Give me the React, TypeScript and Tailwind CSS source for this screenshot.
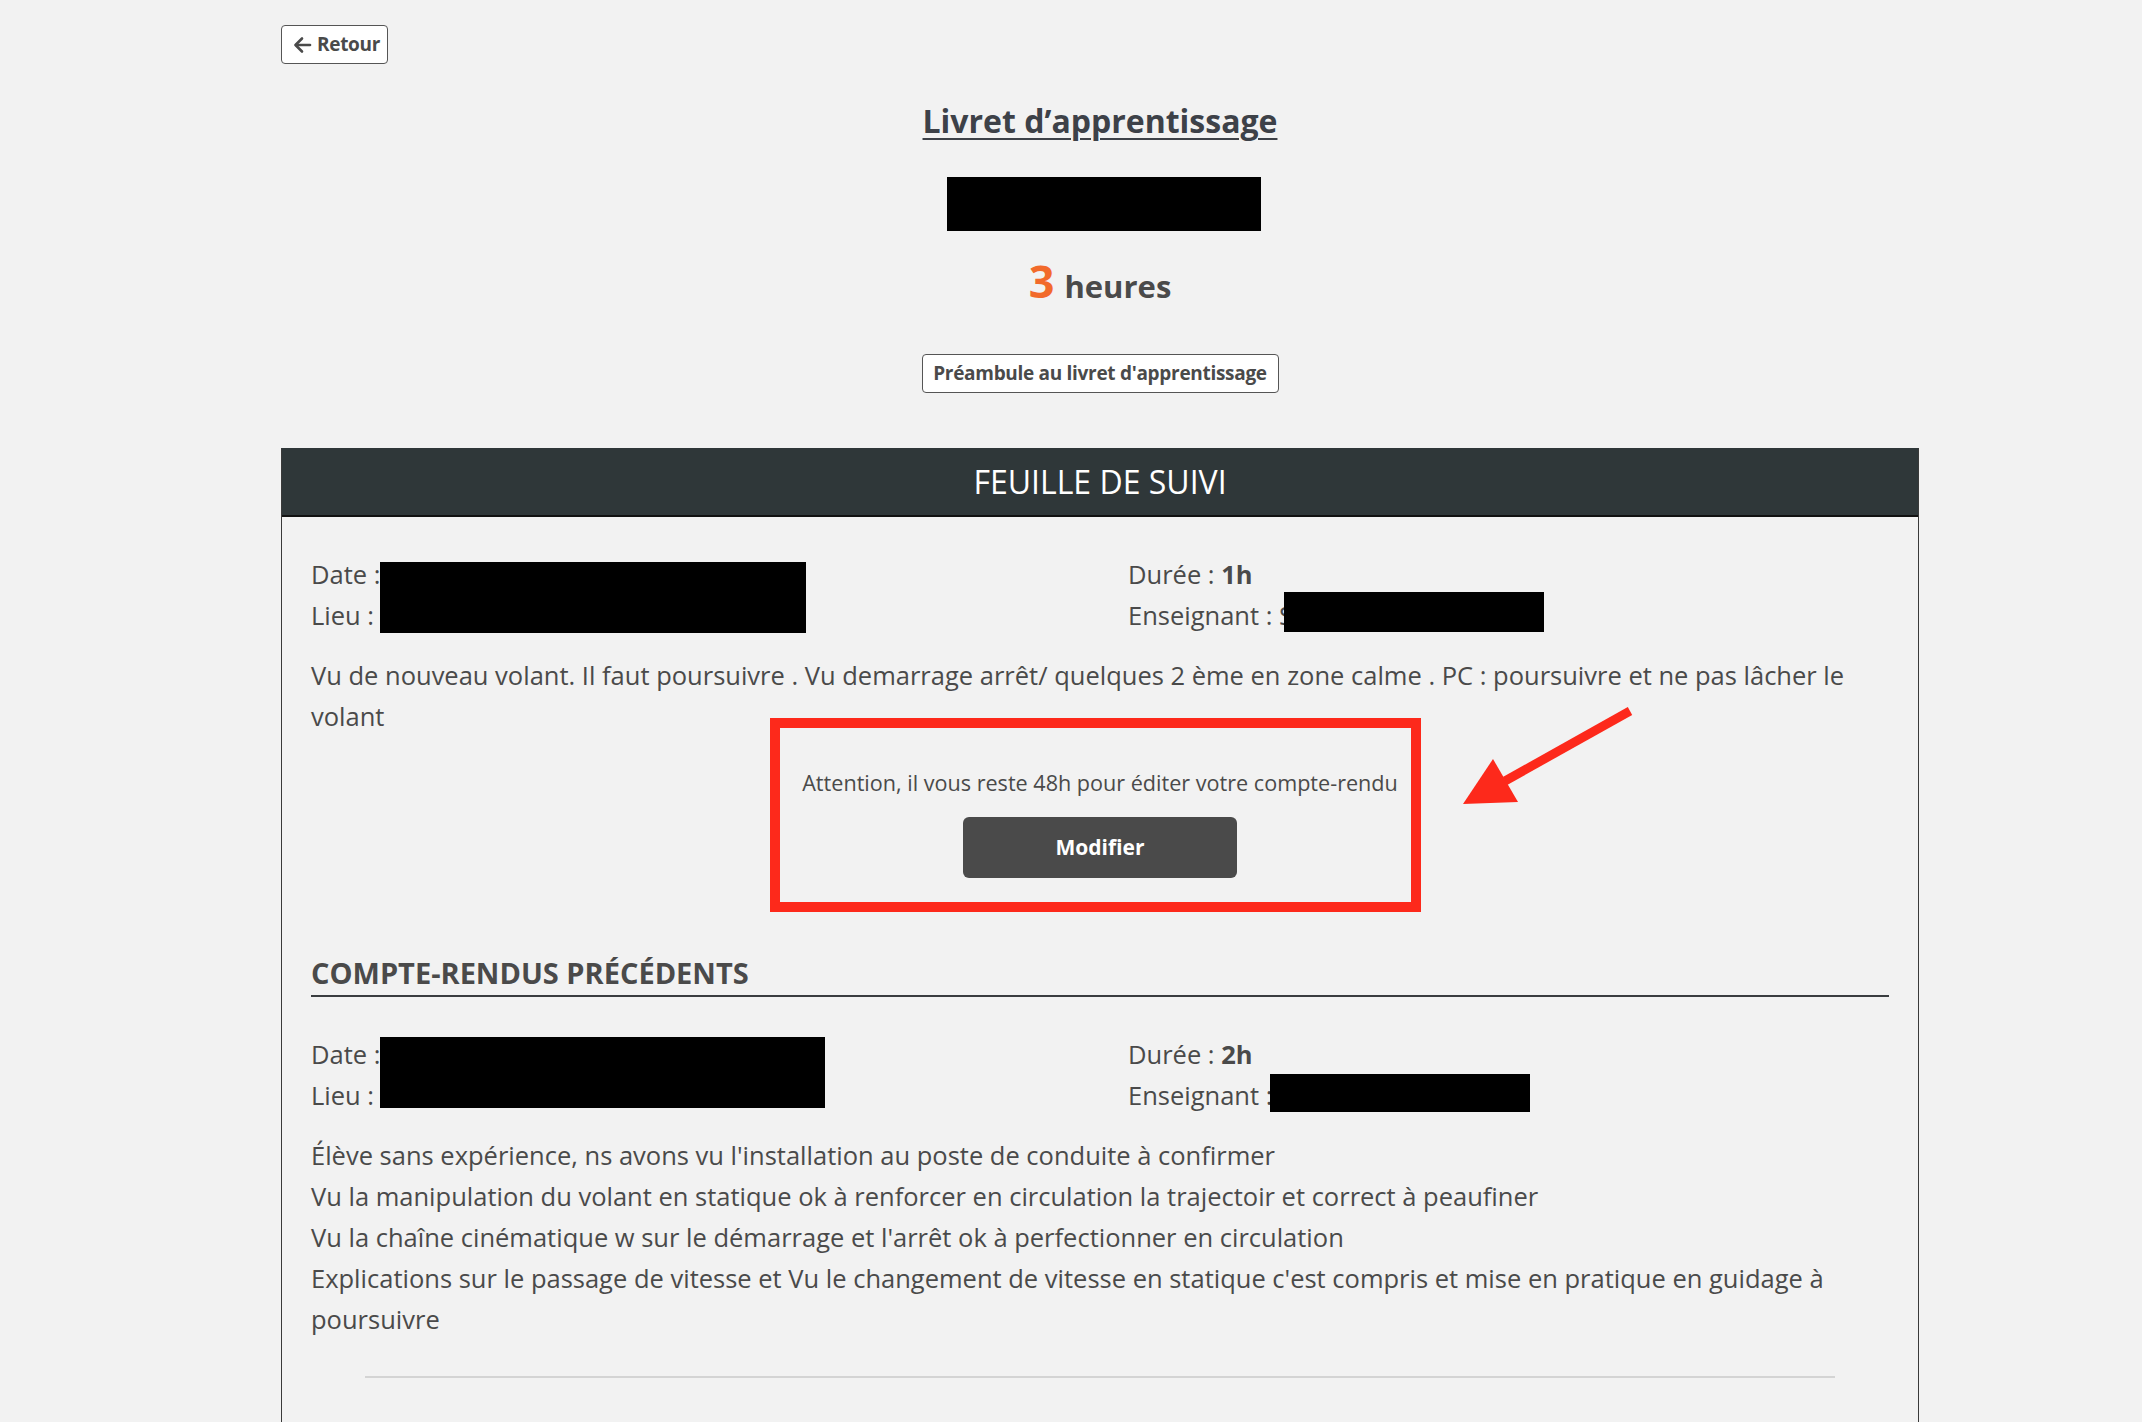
import React from "react";

const font = "font-['Open_Sans','Liberation_Sans',sans-serif]";

function InfoGrid({
  duree,
  dateBox,
  ensBox,
  ensLabel,
}: {
  duree: string;
  dateBox: string;
  ensBox: string;
  ensLabel: string;
}) {
  return (
    <div className="grid grid-cols-[817px_1fr] text-[25.5px] leading-[41px]">
      <div className="relative">
        <div>Date :</div>
        <div>Lieu :</div>
        <div className={"absolute bg-black " + dateBox} />
      </div>
      <div className="relative">
        <div>
          Durée : <span className="font-bold">{duree}</span>
        </div>
        <div>{ensLabel}</div>
        <div className={"absolute bg-black " + ensBox} />
      </div>
    </div>
  );
}

export default function App() {
  return (
    <div className={"min-h-[1422px] w-full bg-[#f2f2f2] text-[#4a4a4a] " + font}>
      <div className="ml-[281px] w-[1638px]">
        {/* Top bar */}
        <div className="pt-[25px]">
          <button className="flex h-[39px] w-[107px] items-center gap-[5px] rounded-[4px] border border-[#555] bg-white pl-[11px] text-[19px] font-bold tracking-[-0.3px] text-[#4a4a4a]">
            <svg width="19" height="18" viewBox="0 0 19 18" fill="none" stroke="#4a4a4a" strokeWidth="2.6" strokeLinecap="round" strokeLinejoin="round">
              <path d="M17 9H3" />
              <path d="M9 2.5L2.5 9L9 15.5" />
            </svg>
            <span>Retour</span>
          </button>
        </div>

        {/* Title block */}
        <div className="flex flex-col items-center">
          <h1 className="mt-[35px] text-[32px] font-bold leading-[44px] text-[#3d4148] underline decoration-[2px] underline-offset-[5px]">
            Livret d’apprentissage
          </h1>
          <div className="ml-[8px] mt-[34px] h-[54px] w-[314px] bg-black" />
          <div className="mt-[25px] flex items-baseline gap-[10px] font-bold leading-[50px]">
            <span className="text-[45px] text-[#f26a2b]">3</span>
            <span className="text-[31px] text-[#4a4a4a]">heures</span>
          </div>
          <button className="mt-[43px] h-[39px] w-[357px] rounded-[4px] border border-[#555] bg-white text-[19px] font-bold tracking-[-0.3px] text-[#4a4a4a]">
            Préambule au livret d'apprentissage
          </button>
        </div>

        {/* Panel */}
        <div className="mt-[55px] border-x border-[#3a3a3a]">
          <div className="flex h-[69px] items-center justify-center border-b-2 border-[#111] bg-[#2f3739] text-[32px] text-white">
            FEUILLE DE SUIVI
          </div>
          <div className="relative px-[29px] pt-[37px]">
            <InfoGrid
              duree="1h"
              ensLabel="Enseignant : S"
              dateBox="left-[69px] top-[8px] h-[71px] w-[426px]"
              ensBox="left-[156px] top-[38px] h-[40px] w-[260px]"
            />
            <p className="mt-[19px] text-[25.5px] leading-[41px]">
              Vu de nouveau volant. Il faut poursuivre . Vu demarrage arrêt/ quelques 2 ème en zone calme . PC : poursuivre et ne pas lâcher le volant
            </p>

            {/* Warning block with red annotation */}
            <div className="-mt-[19px] ml-[459px] flex w-[651px] flex-col items-center border-[10px] border-[#fd291b] pb-[24px] pl-[9px] pt-[38px]">
              <div className="text-[21.6px] leading-[33px]">
                Attention, il vous reste 48h pour éditer votre compte-rendu
              </div>
              <button className="mt-[18px] h-[61px] w-[274px] rounded-[6px] bg-[#4a4a4a] text-[21px] font-bold text-white">
                Modifier
              </button>
            </div>

            <svg
              className="absolute left-[1168px] top-[183px]"
              width="190"
              height="115"
              viewBox="0 0 190 115"
            >
              <line x1="180" y1="11" x2="55" y2="81" stroke="#fd291b" strokeWidth="9" />
              <polygon points="13,104 43,59 68,102" fill="#fd291b" />
            </svg>

            <h2 className="mt-[44px] border-b-2 border-[#3a3d40] pb-[5px] text-[29px] font-bold uppercase leading-[34px] text-[#4a4a4a]">
              Compte-rendus précédents
            </h2>

            <div className="mt-[37px]">
              <InfoGrid
                duree="2h"
                ensLabel="Enseignant :"
                dateBox="left-[69px] top-[3px] h-[71px] w-[445px]"
                ensBox="left-[142px] top-[40px] h-[38px] w-[260px]"
              />
            </div>
            <div className="mt-[19px] text-[25.5px] leading-[41px]">
              <div>Élève sans expérience, ns avons vu l'installation au poste de conduite à confirmer</div>
              <div>Vu la manipulation du volant en statique ok à renforcer en circulation la trajectoir et correct à peaufiner</div>
              <div>Vu la chaîne cinématique w sur le démarrage et l'arrêt ok à perfectionner en circulation</div>
              <div>
                Explications sur le passage de vitesse et Vu le changement de vitesse en statique c'est compris et mise en pratique en guidage à poursuivre
              </div>
            </div>
            <div className="mx-[54px] mt-[36px] h-[2px] bg-[#d4d4d4]" />
            <div className="h-[60px]" />
          </div>
        </div>
      </div>
    </div>
  );
}
